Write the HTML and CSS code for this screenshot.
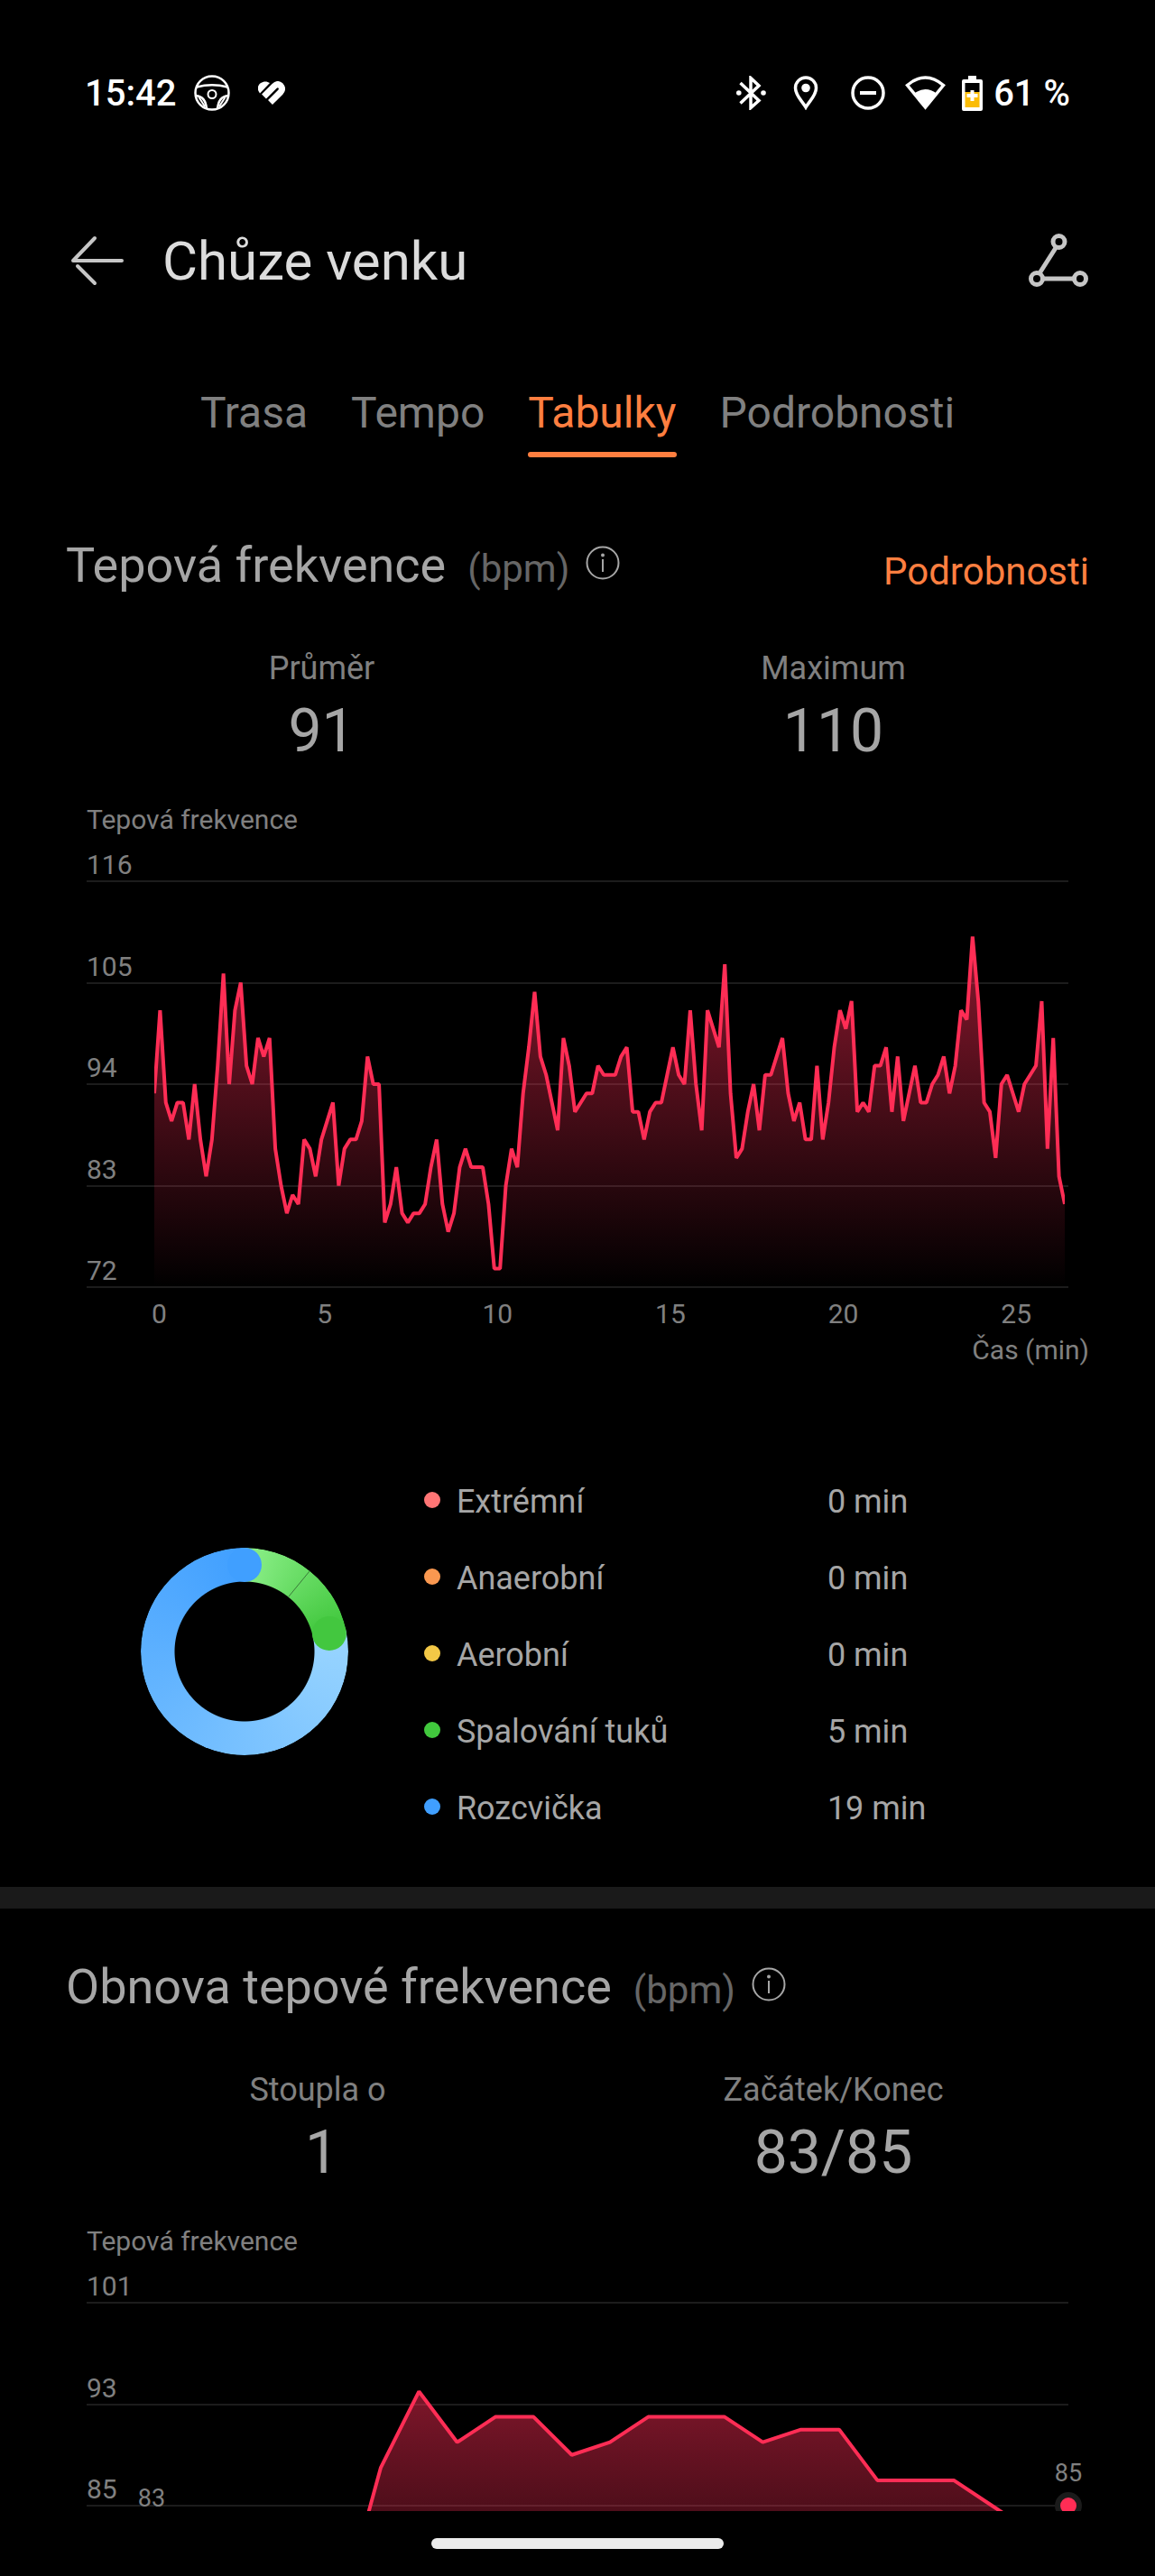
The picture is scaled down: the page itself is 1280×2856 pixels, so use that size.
FILE: index.html
```
<!DOCTYPE html>
<html lang="cs">
<head>
    <meta charset="utf-8">
    <meta name="viewport" content="width=device-width, initial-scale=1">
    <title>Chůze venku</title>
    <link rel="stylesheet" href="styles.css">
</head>

<body>
    <div class="statusbar">
        <span class="clock">15:42</span>
        <svg class="ico-wheel" width="40" height="40" viewBox="0 0 40 40" fill="none" stroke="#fff" stroke-width="2.500">
            <circle cx="20" cy="20" r="18.500"/>
            <path d="M3 13.500Q20 9 37 13.500"/>
            <circle cx="20" cy="21.500" r="4.500" stroke-width="2"/>
            <path d="M2 23Q13 24 14 38M38 23Q27 24 26 38"/>
            <path d="M5.500 25L12 35M34.500 25L28 35" stroke-width="2"/>
        </svg>
        <svg class="ico-health" width="30" height="26" viewBox="0 0 30 26" fill="none" stroke="#fff" stroke-width="7">
            <path d="M2 13.500L13 2C7 -2.500 -3 3 .5 11Z" fill="#fff" stroke="none"/>
            <path d="M6.500 17L18 5.500Q21.500 2 25 5Q28 8.500 25 12L13.500 23.500"/>
        </svg>
        <div class="statusRight">
            <svg class="ico-bt" width="33" height="38" viewBox="0 0 33 38" fill="none" stroke="#fff" stroke-width="3.500">
                <path d="M4.500 8L25 27.500L16 35.500V2.500L25 11L4.500 30.500"/>
                <circle cx="2.800" cy="19" r="2.800" fill="#fff" stroke="none"/>
                <circle cx="30" cy="19" r="2.800" fill="#fff" stroke="none"/>
            </svg>
            <svg class="ico-pin" width="28" height="38" viewBox="0 0 28 38" fill="none" stroke="#fff" stroke-width="3.500">
                <path d="M14 35C10 28 2.500 22 2.500 13.500A11.500 11.500 0 0 1 25.500 13.500C25.500 22 18 28 14 35Z"/>
                <circle cx="14" cy="13.500" r="4.800" fill="#fff" stroke="none"/>
            </svg>
            <svg class="ico-dnd" width="38" height="38" viewBox="0 0 38 38" fill="none" stroke="#fff" stroke-width="3.500">
                <circle cx="19" cy="19" r="17"/>
                <path d="M10 19H28" stroke-width="4"/>
            </svg>
            <svg class="ico-wifi" width="45" height="38" viewBox="0 0 45 38" fill="none" stroke="#fff" stroke-width="3.500">
                <path d="M22.500 35L2.500 10.500Q22.500 -6.500 42.500 10.500Z"/>
                <path d="M22.500 37L9.500 20Q22.500 10 35.500 20Z" fill="#fff" stroke="none"/>
            </svg>
            <svg class="ico-battery" width="23" height="39" viewBox="0 0 23 39">
                <path d="M7 0H16V4H21Q23 4 23 6V37Q23 39 21 39H2Q0 39 0 37V6Q0 4 2 4H7Z" fill="#fff"/>
                <rect x="3.500" y="8" width="16" height="10" fill="#000"/>
                <rect x="3.500" y="18" width="16" height="17" fill="#fbbc05"/>
                <path d="M11.500 16V28M5.500 22H17.500" stroke="#fff" stroke-width="4"/>
            </svg>
            <span class="percent">61 %</span>
        </div>
    </div>

    <header class="appbar">
        <button class="iconButton" aria-label="Zpět">
            <svg width="60" height="56" viewBox="0 0 60 56" fill="none" stroke="#c6c6c6" stroke-width="4" stroke-linecap="round" stroke-linejoin="round">
                <path d="M57 28H3L27 3M8 34L27 53"/>
            </svg>
        </button>
        <h1>Chůze venku</h1>
        <button class="iconButton" aria-label="Trasa">
            <svg width="66" height="60" viewBox="0 0 66 60" fill="none" stroke="#c6c6c6" stroke-width="5">
                <circle cx="33.500" cy="9" r="6.500"/>
                <circle cx="9" cy="50" r="6.500"/>
                <circle cx="57" cy="50" r="6.500"/>
                <path d="M30.500 15L12 44M15.500 50H50.500"/>
            </svg>
        </button>
    </header>

    <nav class="tabs">
        <button class="tab">Trasa</button>
        <button class="tab">Tempo</button>
        <button class="tab active">Tabulky</button>
        <button class="tab">Podrobnosti</button>
    </nav>

    <main class="content">
        <section class="card">
            <div class="cardHead">
                <h2>Tepová frekvence</h2>
                <span class="unit">(bpm)</span>
                <button class="info" aria-label="Informace">
                    <svg width="38" height="38" viewBox="0 0 38 38" fill="none" stroke="#a6a6a6" stroke-width="2">
                        <circle cx="19" cy="19" r="17.500"/>
                        <path d="M19 15V29"/>
                        <circle cx="19" cy="10.500" r="2" fill="#a6a6a6" stroke="none"/>
                    </svg>
                </button>
                <a href="#" class="more">Podrobnosti</a>
            </div>
            <div class="stats">
                <div><div class="statLabel">Průměr</div><div class="statValue">91</div></div>
                <div><div class="statLabel">Maximum</div><div class="statValue">110</div></div>
            </div>

            <div class="chart">
                <div class="chartTitle">Tepová frekvence</div>
                <div class="plot">
                    <div class="line">116</div>
                    <div class="line">105</div>
                    <div class="line">94</div>
                    <div class="line">83</div>
                    <div class="line">72</div>
                    <div class="canvas canvasRate" id="rate"></div>
                </div>
                <div class="xaxis">
                    <span>0</span><span>5</span><span>10</span><span>15</span><span>20</span><span>25</span>
                </div>
            </div>
            <div class="xname">Čas (min)</div>

            <div class="zones">
                <div class="donut">
                    <div class="ring"></div>
                    <svg class="caps" width="230" height="230" viewBox="0 0 230 230">
                        <path d="M164 54L187 26" stroke="#3a7a3a" stroke-width="1"/>
                        <circle cx="115" cy="19" r="19" fill="#409fff"/>
                        <circle cx="208.900" cy="95" r="19" fill="#43c73f"/>
                    </svg>
                </div>
                <table class="legend">
                    <tr><th scope="row"><i class="dot extreme"></i>Extrémní</th><td>0 min</td></tr>
                    <tr><th scope="row"><i class="dot anaerobic"></i>Anaerobní</th><td>0 min</td></tr>
                    <tr><th scope="row"><i class="dot aerobic"></i>Aerobní</th><td>0 min</td></tr>
                    <tr><th scope="row"><i class="dot fat"></i>Spalování tuků</th><td>5 min</td></tr>
                    <tr><th scope="row"><i class="dot warmup"></i>Rozcvička</th><td>19 min</td></tr>
                </table>
            </div>
        </section>

        <section class="card">
            <div class="cardHead">
                <h2>Obnova tepové frekvence</h2>
                <span class="unit">(bpm)</span>
                <button class="info" aria-label="Informace">
                    <svg width="38" height="38" viewBox="0 0 38 38" fill="none" stroke="#a6a6a6" stroke-width="2">
                        <circle cx="19" cy="19" r="17.500"/>
                        <path d="M19 15V29"/>
                        <circle cx="19" cy="10.500" r="2" fill="#a6a6a6" stroke="none"/>
                    </svg>
                </button>
            </div>
            <div class="stats">
                <div><div class="statLabel">Stoupla o&nbsp;</div><div class="statValue">1</div></div>
                <div><div class="statLabel">Začátek/Konec</div><div class="statValue">83/85</div></div>
            </div>

            <div class="chart">
                <div class="chartTitle">Tepová frekvence</div>
                <div class="plot">
                    <div class="line">101</div>
                    <div class="line">93</div>
                    <div class="line">85</div>
                    <div class="line"></div>
                    <div class="line"></div>
                    <div class="canvas canvasRecovery" id="recovery">
                        <div class="marker first">83</div>
                        <div class="marker last">85</div>
                    </div>
                </div>
            </div>
        </section>
    </main>

    <footer class="homebar"><div class="handle"></div></footer>

    <script src="chart.js"></script>
</body>
</html>
```
FILE: styles.css
```
* {
    box-sizing: border-box;
}

body {
    margin: 0;
    height: 100vh;
    display: flex;
    flex-direction: column;
    background: #000;
    color: #a6a6a6;
    font-family: Roboto, "Noto Sans", sans-serif;
}

h1, h2 {
    margin: 0;
    font-weight: 400;
}

button {
    border: 0;
    padding: 0;
    background: none;
    color: inherit;
    font: inherit;
}

svg {
    display: block;
}

/* system bar */
.statusbar {
    flex: none;
    height: 206px;
    padding: 0 94px;
    display: flex;
    align-items: center;
    color: #fff;
}

.clock {
    font-size: 40px;
    font-weight: 500;
}

.percent {
    font-size: 40px;
    font-weight: 500;
    margin-left: 12px;
}

.ico-wheel {
    margin-left: 20px;
}

.ico-health {
    margin-left: 31px;
}

.statusRight {
    margin-left: auto;
    display: flex;
    align-items: center;
}

.ico-pin {
    margin-left: 30px;
}

.ico-dnd {
    margin-left: 36px;
}

.ico-wifi {
    margin-left: 22px;
}

.ico-battery {
    margin-left: 18px;
}

/* app bar */
.appbar {
    flex: none;
    height: 166px;
    padding: 0 74px 0 78px;
    display: flex;
    align-items: center;
}

.appbar h1 {
    flex: 1;
    margin-left: 42px;
    font-size: 60px;
    color: #dcdcdc;
}

.tabs {
    flex: none;
    display: flex;
    justify-content: center;
    gap: 48px;
    padding: 54px 0 34px;
}

.tab {
    padding-bottom: 11px;
    border-bottom: 6px solid transparent;
    font-size: 48px;
    line-height: 64px;
    color: #808080;
}

.tab.active {
    position: relative;
    color: #ff7f40;
}

.tab.active::after {
    content: "";
    position: absolute;
    left: 0;
    right: 0;
    bottom: -6px;
    height: 6px;
    border-radius: 3px;
    background: #ff7f40;
}

/* cards */
.content {
    flex: 1;
    min-height: 0;
    overflow-y: auto;
    overflow-x: hidden;
    scrollbar-width: none;
}

.card {
    padding: 50px 73px 44px;
}

.card + .card {
    padding-top: 51px;
    border-top: 24px solid #1a1a1a;
}

.cardHead {
    display: flex;
    align-items: flex-end;
}

.cardHead h2 {
    font-size: 54px;
    line-height: 72px;
}

.unit {
    margin-left: 24px;
    font-size: 42px;
    line-height: 64px;
    color: #666;
}

.info {
    margin-left: 18px;
    padding-bottom: 20px;
}

.more {
    margin-left: auto;
    font-size: 42px;
    line-height: 58px;
    color: #ff7f40;
    text-decoration: none;
}

.stats {
    display: grid;
    grid-template-columns: 1fr 1fr;
    margin-top: 54px;
    text-align: center;
}

.statLabel {
    font-size: 36px;
    line-height: 48px;
    color: #808080;
}

.statValue {
    font-size: 66px;
    line-height: 92px;
}

/* charts */
.chart {
    margin-top: 32px;
    padding: 0 23px;
    font-size: 30px;
    line-height: 40px;
    color: #808080;
}

.plot {
    position: relative;
    height: 499px;
    display: flex;
    flex-direction: column;
}

.line {
    flex: 1;
    display: flex;
    align-items: flex-end;
    border-bottom: 2px solid #1c1c1c;
    line-height: 34px;
}

.line:first-child {
    flex: none;
    height: 49px;
}

.canvas {
    position: absolute;
    top: 48px;
    bottom: 1px;
}

.canvasRate {
    left: 75px;
    right: 4px;
}

.canvasRecovery {
    left: 72px;
    right: 0;
}

.canvas svg {
    width: 100%;
    height: 100%;
}

.curve {
    fill: none;
    stroke: #ff2d55;
    stroke-width: 4px;
    stroke-linejoin: bevel;
    vector-effect: non-scaling-stroke;
}

/* value above a dot on the curve */
.marker {
    position: absolute;
    width: 60px;
    height: 102px;
    margin-left: -30px;
    transform: translateY(-50%);
    font-size: 27px;
    line-height: 30px;
    text-align: center;
}

.marker::after {
    content: "";
    position: absolute;
    left: 15px;
    top: 36px;
    width: 18px;
    height: 18px;
    border: 6px solid #1b1b1b;
    border-radius: 50%;
    background: #ff2d55;
    box-sizing: content-box;
}

.first {
    left: 0;
    top: 56.25%;
}

.last {
    left: 100%;
    top: 50%;
}

.xaxis {
    display: grid;
    grid-template-columns: 1fr repeat(5, 2fr);
    margin: 9px -38px 0 72px;
    text-align: center;
}

.xaxis span:first-child {
    text-align: left;
}

.xname {
    font-size: 30px;
    line-height: 40px;
    text-align: right;
    color: #808080;
}

/* heart rate zones */
.zones {
    display: grid;
    grid-template-columns: 35% 1fr;
    align-items: start;
    margin-top: 106px;
}

.donut {
    position: relative;
    justify-self: center;
    width: 230px;
    height: 230px;
    margin-top: 93px;
}

.ring {
    height: 100%;
    border-radius: 50%;
    background: conic-gradient(#8df08a, #3fc63b 78deg, #99d5ff 78deg, #409fff);
    -webkit-mask: radial-gradient(circle, transparent 77px, #000 78px);
    mask: radial-gradient(circle, transparent 77px, #000 78px);
}

.caps {
    position: absolute;
    top: 0;
    left: 0;
}

.legend {
    border-collapse: collapse;
    font-size: 36px;
    line-height: 85px;
}

.legend th,
.legend td {
    padding: 0;
    font-weight: 400;
    text-align: left;
}

.legend th {
    width: 447px;
}

.dot {
    display: inline-block;
    width: 18px;
    height: 18px;
    margin-right: 18px;
    border-radius: 50%;
    vertical-align: 5px;
}

.extreme { background: #ff7575; }
.anaerobic { background: #fa9850; }
.aerobic { background: #f3c846; }
.fat { background: #41c83d; }
.warmup { background: #409fff; }

.homebar {
    flex: none;
    height: 72px;
    padding-top: 30px;
}

.handle {
    width: 324px;
    height: 12px;
    margin: 0 auto;
    border-radius: 6px;
    background: #ebebeb;
}
```
FILE: chart.js
```
var rate = [
    93, 102, 92, 90, 92, 92, 88, 94, 88, 84, 88, 96, 106, 94, 102, 105, 96, 94, 99, 97,
    99, 87, 83, 80, 82, 81, 88, 87, 84, 88, 90, 92, 83, 87, 88, 88, 90, 97, 94, 94,
    79, 81, 85, 80, 79, 80, 80, 81, 85, 88, 81, 78, 80, 85, 87, 85, 85, 85, 81, 74,
    74, 83, 87, 85, 93, 98, 104, 97, 95, 92, 89, 99, 96, 91, 92, 93, 93, 96, 95, 95,
    95, 97, 98, 91, 91, 88, 91, 92, 92, 95, 98, 95, 94, 102, 94, 89, 102, 100, 98, 107,
    93, 86, 87, 91, 94, 89, 95, 95, 97, 99, 93, 90, 92, 88, 88, 96, 88, 92, 98, 102,
    100, 103, 91, 92, 91, 96, 96, 98, 91, 97, 90, 93, 96, 92, 92, 94, 95, 97, 93, 96,
    102, 101, 110, 103, 92, 91, 86, 94, 95, 93, 91, 94, 95, 96, 103, 87, 99, 84, 81
];

var recovery = [
    83, 82, 80, 78, 76, 77, 88, 94, 90, 92, 92, 89, 90, 92, 92, 92, 90, 91, 91, 87,
    87, 87, 85, 83, 85
];

// one unit of the viewBox is one sample wide and one bpm high
function drawChart(id, data, min, max) {
    var w = data.length - 1;
    var h = max - min;
    var points = data.map(function(v, i) { return i + "," + (max - v); }).join(" ");

    var svg = '<svg viewBox="0 0 ' + w + ' ' + h + '" preserveAspectRatio="none">' +
        '<defs><linearGradient id="' + id + 'Fill" gradientUnits="userSpaceOnUse" x1="0" y1="0" x2="0" y2="' + h + '">' +
        '<stop offset="0" stop-color="#ff2d55" stop-opacity="0.63"/>' +
        '<stop offset="1" stop-color="#ff2d55" stop-opacity="0"/>' +
        '</linearGradient></defs>' +
        '<polygon fill="url(#' + id + 'Fill)" points="0,' + h + ' ' + points + ' ' + w + ',' + h + '"/>' +
        '<polyline class="curve" points="' + points + '"/></svg>';
    document.getElementById(id).insertAdjacentHTML("afterbegin", svg);
}

drawChart("rate", rate, 72, 116);
drawChart("recovery", recovery, 69, 101);
```
